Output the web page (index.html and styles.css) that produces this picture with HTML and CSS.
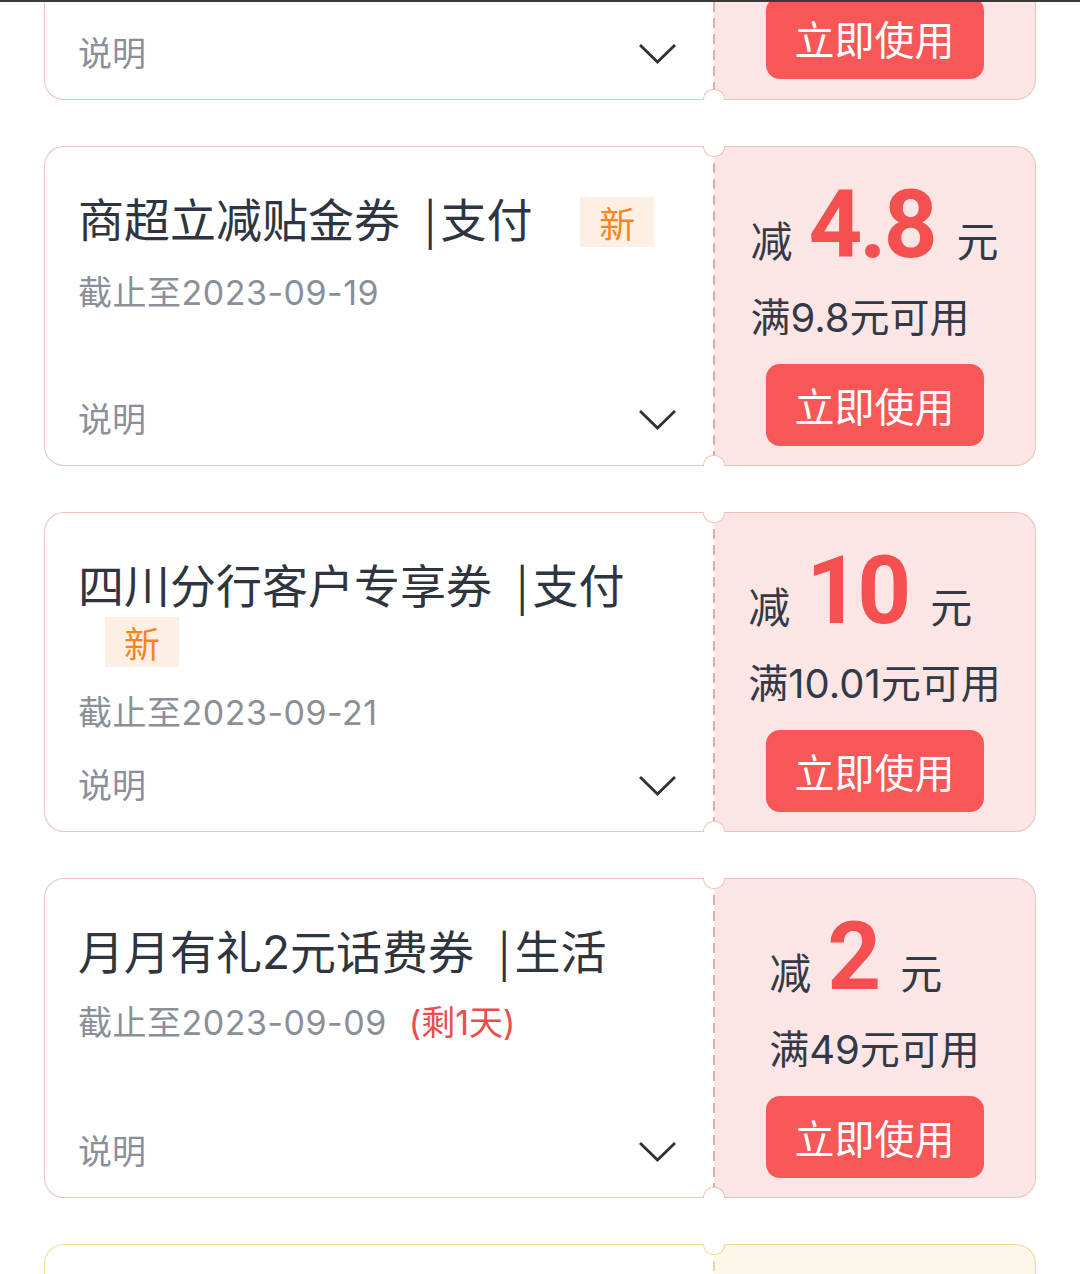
FILE: index.html
```html
<!DOCTYPE html>
<html lang="zh-CN">
<head>
    <meta charset="UTF-8">
    <meta name="viewport" content="width=device-width, initial-scale=1.0">
    <title>我的优惠券</title>
    <link rel="stylesheet" href="styles.css">
</head>
<body>
    <div class="status-edge"></div>
    <div class="coupon-list">
        <!-- scrolled past: only the bottom of this one is on screen -->
        <div class="coupon peek">
            <div class="coupon-main">
                <div class="coupon-desc">
                    <span>说明</span>
                    <svg class="chevron" viewBox="0 0 40 22" width="40" height="22"><path d="M2 2L19.5 19L37 2" /></svg>
                </div>
            </div>
            <div class="coupon-side">
                <button class="use-btn">立即使用</button>
            </div>
        </div>

        <div class="coupon">
            <div class="coupon-main">
                <div class="coupon-title">商超立减贴金券<span class="tag"><span class="bar">|</span>支付</span> <span class="badge">新</span></div>
                <div class="coupon-date">截止至2023-09-19</div>
                <div class="coupon-desc">
                    <span>说明</span>
                    <svg class="chevron" viewBox="0 0 40 22" width="40" height="22"><path d="M2 2L19.5 19L37 2" /></svg>
                </div>
            </div>
            <div class="coupon-side">
                <div class="coupon-value">
                    <div class="amount"><span class="unit">减</span><span class="num">4.8</span><span class="unit">元</span></div>
                    <div class="limit">满9.8元可用</div>
                </div>
                <button class="use-btn">立即使用</button>
            </div>
        </div>

        <div class="coupon">
            <div class="coupon-main">
                <div class="coupon-title">四川分行客户专享券<span class="tag"><span class="bar">|</span>支付</span> <span class="badge">新</span></div>
                <div class="coupon-date">截止至2023-09-21</div>
                <div class="coupon-desc">
                    <span>说明</span>
                    <svg class="chevron" viewBox="0 0 40 22" width="40" height="22"><path d="M2 2L19.5 19L37 2" /></svg>
                </div>
            </div>
            <div class="coupon-side">
                <div class="coupon-value">
                    <div class="amount"><span class="unit">减</span><span class="num">10</span><span class="unit">元</span></div>
                    <div class="limit">满10.01元可用</div>
                </div>
                <button class="use-btn">立即使用</button>
            </div>
        </div>

        <div class="coupon">
            <div class="coupon-main">
                <div class="coupon-title">月月有礼2元话费券<span class="tag"><span class="bar">|</span>生活</span></div>
                <div class="coupon-date">截止至2023-09-09<span class="remain">(剩1天)</span></div>
                <div class="coupon-desc">
                    <span>说明</span>
                    <svg class="chevron" viewBox="0 0 40 22" width="40" height="22"><path d="M2 2L19.5 19L37 2" /></svg>
                </div>
            </div>
            <div class="coupon-side">
                <div class="coupon-value">
                    <div class="amount"><span class="unit">减</span><span class="num">2</span><span class="unit">元</span></div>
                    <div class="limit">满49元可用</div>
                </div>
                <button class="use-btn">立即使用</button>
            </div>
        </div>

        <!-- next one only shows its top edge -->
        <div class="coupon gold">
            <div class="coupon-main"></div>
            <div class="coupon-side"></div>
        </div>
    </div>
</body>
</html>
```

FILE: styles.css
```css
html, body {
    margin: 0;
    height: 1274px;
    overflow: hidden;
}
body {
    background: #ffffff;
    font-family: Inter, "Noto Sans CJK SC", sans-serif;
    color: #2f3540;
}
.status-edge {
    position: relative;
    z-index: 3;
    height: 2px;
    background: #3a3a3a;
}
.coupon-list {
    padding: 0 44px;
}
.coupon {
    position: relative;
    display: flex;
    height: 320px;
    margin-bottom: 46px;
}
/* half-round notches on the perforation */
.coupon::before,
.coupon::after {
    content: "";
    position: absolute;
    z-index: 2;
    left: 658.5px;
    width: 20px;
    height: 10px;
    background: #ffffff;
    border: 1.5px solid #efc1ba;
}
.coupon::before {
    top: 0;
    border-top: none;
    border-radius: 0 0 10px 10px;
}
.coupon::after {
    bottom: 0;
    border-bottom: none;
    border-radius: 10px 10px 0 0;
}
.coupon-main {
    width: 670px;
    box-sizing: border-box;
    border: 1.5px solid #efc1ba;
    border-right: none;
    border-radius: 20px 0 0 20px;
    padding: 42.5px 36px 23px 33px;
    display: flex;
    flex-direction: column;
}
.coupon-title {
    font-size: 46px;
    line-height: 54px;
    word-spacing: 8px;
    color: #2f3540;
}
.tag {
    margin-left: 24px;
    word-spacing: 0;
    font-family: "Noto Sans CJK SC", sans-serif;
}
.tag .bar {
    margin-right: 4px;
}
.badge {
    display: inline-block;
    margin-left: 27px;
    padding: 0 19px;
    font-family: "Noto Sans CJK SC", sans-serif;
    font-size: 36px;
    line-height: 50px;
    background: #fdefe4;
    color: #f5861f;
    vertical-align: middle;
    position: relative;
    top: -2px;
    word-spacing: 0;
}
.coupon-date {
    margin-top: 22px;
    font-size: 34px;
    line-height: 44px;
    letter-spacing: 0.5px;
    color: #8a8f98;
}
.remain {
    margin-left: 22px;
    color: #ef4a4c;
    letter-spacing: 0;
}
.coupon-desc {
    margin-top: auto;
    display: flex;
    justify-content: space-between;
    align-items: center;
    font-size: 34px;
    line-height: 44px;
    color: #8a8f98;
}
.chevron path {
    fill: none;
    stroke: #2e3136;
    stroke-width: 2.8;
}
.coupon-side {
    position: relative;
    flex: 1;
    box-sizing: border-box;
    background: #fce6e5;
    border: 1.5px solid #efc1ba;
    border-left: none;
    border-radius: 0 20px 20px 0;
    padding-top: 29.5px;
    display: flex;
    flex-direction: column;
    align-items: center;
}
.coupon-side::before {
    content: "";
    position: absolute;
    left: -1px;
    top: 0;
    bottom: 0;
    width: 2px;
    background: repeating-linear-gradient(to bottom, #e3acab 0 10px, transparent 10px 16px);
}
.coupon-value {
    display: flex;
    flex-direction: column;
    align-items: flex-start;
    color: #343a45;
}
.amount {
    display: flex;
    align-items: baseline;
    height: 96px;
}
.amount .unit {
    font-size: 42px;
}
.amount .num {
    margin: 0 22px 0 16px;
    font-family: Roboto, "Liberation Sans", sans-serif;
    font-weight: 700;
    font-size: 94px;
    line-height: 96px;
    letter-spacing: -3px;
    color: #f4504f;
}
.limit {
    margin-top: 23px;
    font-size: 40px;
    line-height: 44px;
}
.use-btn {
    margin-top: 24px;
    width: 218px;
    height: 82px;
    flex-shrink: 0;
    padding: 0;
    border: none;
    border-radius: 14px;
    background: #f75757;
    color: #ffffff;
    font-family: "Noto Sans CJK SC", sans-serif;
    font-size: 40px;
}
/* the card cut off by the top of the screen */
.peek {
    height: 98px;
}
.peek::before {
    display: none;
}
.peek .coupon-main {
    border-top: none;
    border-radius: 0 0 0 20px;
    padding-top: 0;
}
.peek .coupon-side {
    border-top: none;
    border-radius: 0 0 20px 0;
    padding: 0 0 20px;
    justify-content: flex-end;
}
.gold::before,
.gold::after,
.gold .coupon-main,
.gold .coupon-side {
    border-color: #f1da92;
}
.gold .coupon-side {
    background: #fdf7ea;
}
.gold .coupon-side::before {
    background: repeating-linear-gradient(to bottom, #ecd7a0 0 10px, transparent 10px 16px);
}
```
